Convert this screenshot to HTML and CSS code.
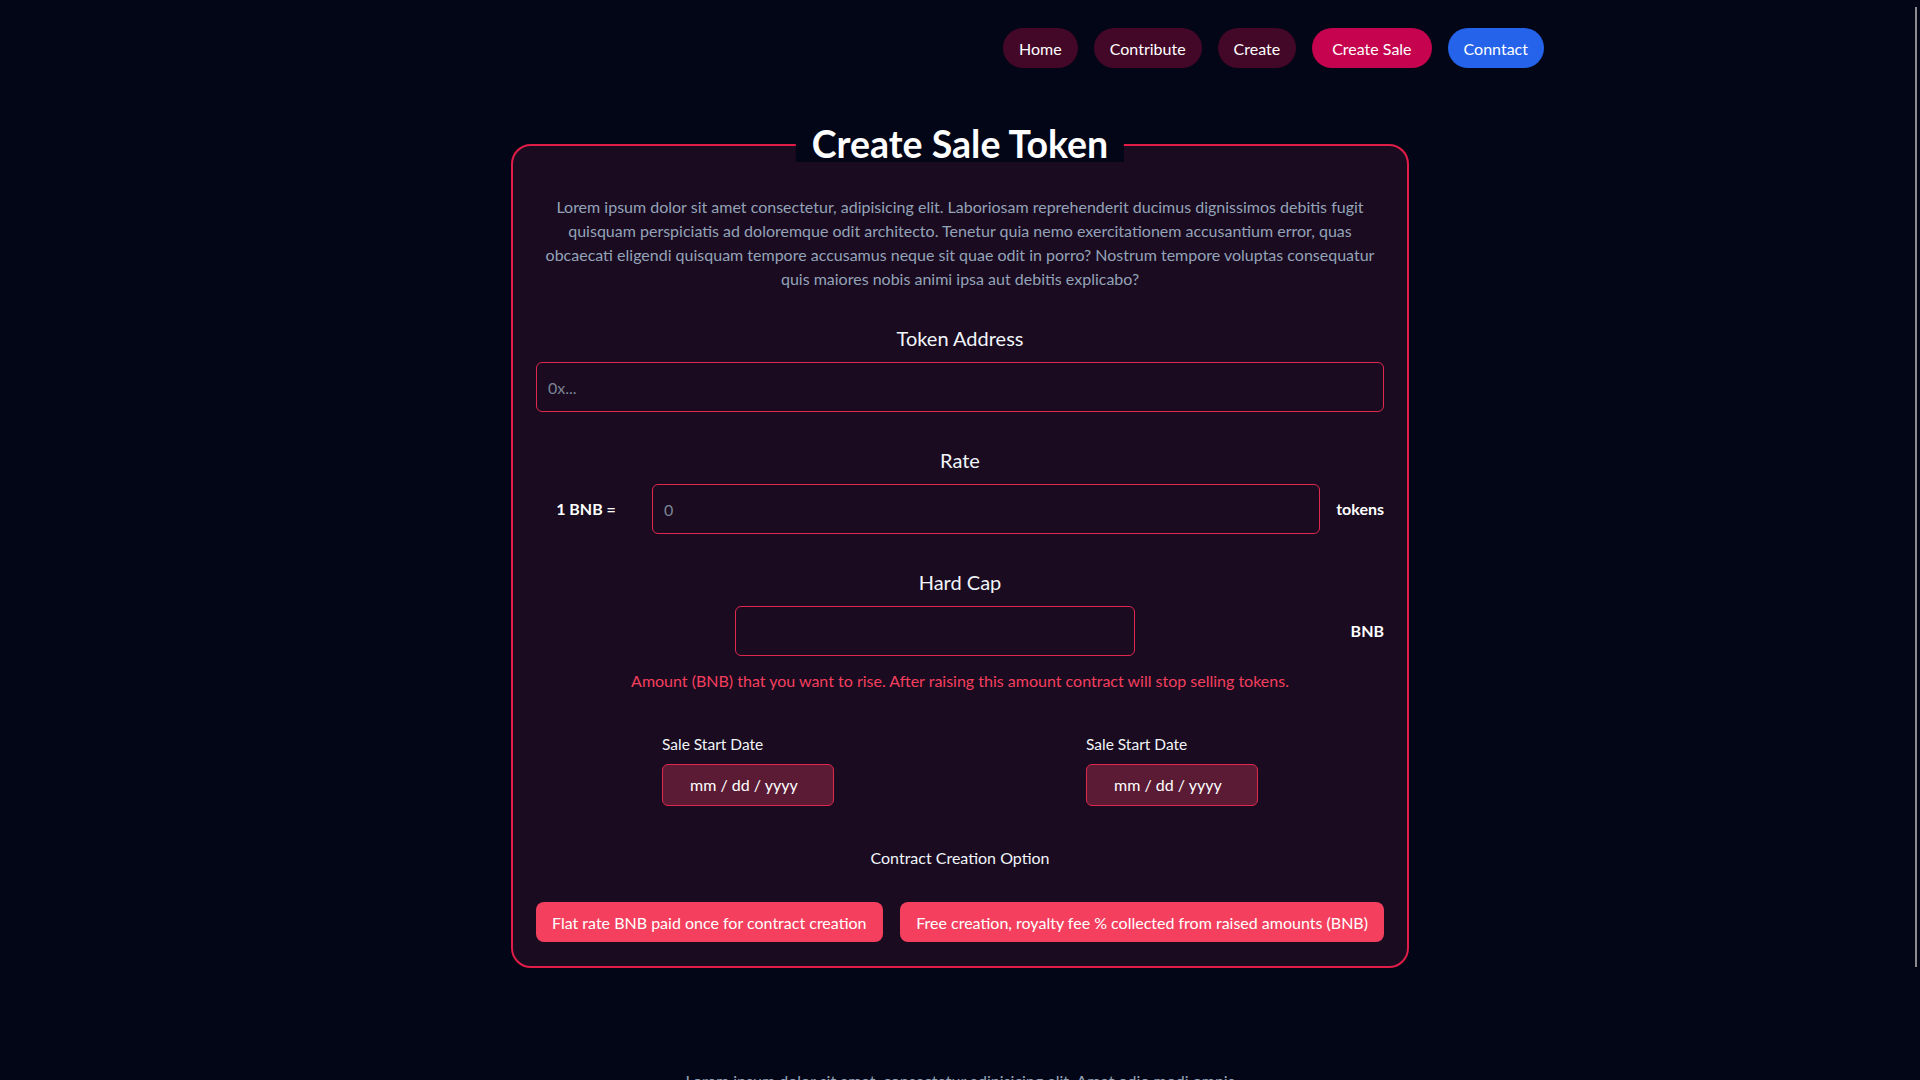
FILE: index.html
```html
<!DOCTYPE html>
<html lang="en">
<head>
<meta charset="utf-8">
<title>Create Sale Token</title>
<link rel="stylesheet" href="styles.css">
</head>
<body>
<header class="nav">
  <div class="container nav-inner">
    <a class="pill pill-dark" href="#">Home</a>
    <a class="pill pill-dark" href="#">Contribute</a>
    <a class="pill pill-dark" href="#">Create</a>
    <a class="pill pill-active" href="#">Create Sale</a>
    <a class="pill pill-blue" href="#">Conntact</a>
  </div>
</header>

<main class="main">
  <section class="card">
    <h1 class="card-title">Create Sale Token</h1>
    <p class="intro">Lorem ipsum dolor sit amet consectetur, adipisicing elit. Laboriosam reprehenderit ducimus dignissimos debitis fugit quisquam perspiciatis ad doloremque odit architecto. Tenetur quia nemo exercitationem accusantium error, quas obcaecati eligendi quisquam tempore accusamus neque sit quae odit in porro? Nostrum tempore voluptas consequatur quis maiores nobis animi ipsa aut debitis explicabo?</p>

    <div class="field field-first">
      <label class="field-label">Token Address</label>
      <input class="text-input" type="text" placeholder="0x...">
    </div>

    <div class="field">
      <label class="field-label">Rate</label>
      <div class="rate-row">
        <span class="rate-prefix">1 BNB =</span>
        <input class="text-input rate-input" type="text" placeholder="0">
        <span class="unit">tokens</span>
      </div>
    </div>

    <div class="field">
      <label class="field-label">Hard Cap</label>
      <div class="cap-row">
        <div class="cap-box">
          <input class="text-input cap-input" type="text">
        </div>
        <span class="unit unit-cap">BNB</span>
      </div>
      <p class="hint">Amount (BNB) that you want to rise. After raising this amount contract will stop selling tokens.</p>
    </div>

    <div class="dates">
      <div class="date-col">
        <div class="date-block">
          <div class="date-label">Sale Start Date</div>
          <div class="date-input">mm / dd / yyyy</div>
        </div>
      </div>
      <div class="date-col">
        <div class="date-block">
          <div class="date-label">Sale Start Date</div>
          <div class="date-input">mm / dd / yyyy</div>
        </div>
      </div>
    </div>

    <p class="option-title">Contract Creation Option</p>
    <div class="options">
      <button class="option-btn" type="button">Flat rate BNB paid once for contract creation</button>
      <button class="option-btn" type="button">Free creation, royalty fee % collected from raised amounts (BNB)</button>
    </div>
  </section>
</main>

<footer class="footer">
  <p class="footer-text">Lorem ipsum dolor sit amet, consectetur adipisicing elit. Amet odio modi omnis<br>voluptatibus quas nesciunt, dolorum sequi facere.</p>
</footer>

<div class="scroll-thumb"></div>
</body>
</html>
```

FILE: styles.css
```css
html {
  scrollbar-width: none;
}
html::-webkit-scrollbar {
  width: 0;
  height: 0;
}
* {
  box-sizing: border-box;
}
body {
  margin: 0;
  background: #020617;
  color: #f1f5f9;
  font-family: Lato, "Liberation Sans", sans-serif;
  font-size: 16px;
  line-height: 24px;
}

.container {
  max-width: 1200px;
  margin: 0 auto;
  padding: 0 16px;
}

.nav {
  padding-top: 28px;
}
.nav-inner {
  display: flex;
  justify-content: flex-end;
  gap: 16px;
}
.pill {
  display: flex;
  align-items: center;
  height: 40px;
  padding: 1px 16px 0;
  border-radius: 9999px;
  color: #ffffff;
  text-decoration: none;
  font-size: 16px;
}
.pill-dark {
  background: #430727;
}
.pill-active {
  background: #c5034e;
  padding: 1px 20px 0;
}
.pill-blue {
  background: #2563eb;
}

.main {
  padding-top: 76px;
}
.card {
  position: relative;
  width: 898px;
  margin: 0 auto;
  border: 2px solid #e11d48;
  border-radius: 20px;
  background: #1a0b20;
  padding: 49px 23px 24px;
}
.card-title {
  position: absolute;
  top: -2px;
  left: 50%;
  transform: translate(-50%, -50%);
  margin: 0;
  padding: 0 16px;
  background: #020617;
  color: #ffffff;
  font-size: 37.5px;
  line-height: 36px;
  font-weight: 700;
  white-space: nowrap;
}
.intro {
  margin: 0;
  text-align: center;
  color: #94a3b8;
}

.field {
  margin-top: 34px;
  display: flex;
  flex-direction: column;
}
.field-first {
  margin-top: 33px;
}
.field-label {
  display: block;
  text-align: center;
  font-size: 20px;
  line-height: 28px;
  margin-bottom: 10px;
  color: #f1f5f9;
}
.text-input {
  display: block;
  width: 100%;
  height: 50px;
  border: 1px solid #e0284f;
  border-radius: 6px;
  background: transparent;
  padding: 0 11px;
  color: #ffffff;
  font-family: inherit;
  font-size: 16px;
  outline: none;
}
.text-input::placeholder {
  color: #7b8494;
}

.rate-row {
  display: flex;
  align-items: center;
}
.rate-prefix {
  width: 100px;
  flex: none;
  text-align: center;
  font-weight: 700;
  color: #ffffff;
}
.rate-input {
  flex: 1;
  width: auto;
  margin: 0 16px;
}
.unit {
  flex: none;
  font-weight: 700;
  color: #ffffff;
}

.cap-row {
  display: flex;
  align-items: center;
}
.cap-box {
  flex: 1;
  display: flex;
  justify-content: center;
}
.cap-input {
  width: 400px;
}
.unit-cap {
  margin-left: 16px;
}
.hint {
  margin: 13px 0 0;
  text-align: center;
  color: #f43f5e;
}

.dates {
  margin-top: 41px;
  display: grid;
  grid-template-columns: 1fr 1fr;
}
.date-col {
  display: flex;
  justify-content: center;
}
.date-block {
  width: 172px;
}
.date-label {
  font-size: 15.5px;
  line-height: 20px;
  margin-bottom: 10px;
  color: #f1f5f9;
}
.date-input {
  display: flex;
  align-items: center;
  height: 42px;
  padding-left: 27px;
  border: 1px solid #e0284f;
  border-radius: 6px;
  background: #5b1b35;
  color: #ffffff;
  font-size: 16px;
}

.option-title {
  margin: 40px 0 0;
  text-align: center;
  color: #f1f5f9;
}
.options {
  margin-top: 32px;
  display: flex;
  justify-content: space-between;
  gap: 16px;
}
.option-btn {
  height: 40px;
  padding: 0 16px;
  border: none;
  border-radius: 8px;
  background: #f43f5e;
  color: #ffffff;
  font-family: inherit;
  font-size: 16px;
  cursor: pointer;
}

.footer {
  padding-top: 101px;
  padding-bottom: 40px;
}
.footer-text {
  margin: 0;
  text-align: center;
  color: #94a3b8;
}

.scroll-thumb {
  position: fixed;
  top: 7px;
  right: 3px;
  width: 2px;
  height: 960px;
  background: #8c8c8c;
}
```
